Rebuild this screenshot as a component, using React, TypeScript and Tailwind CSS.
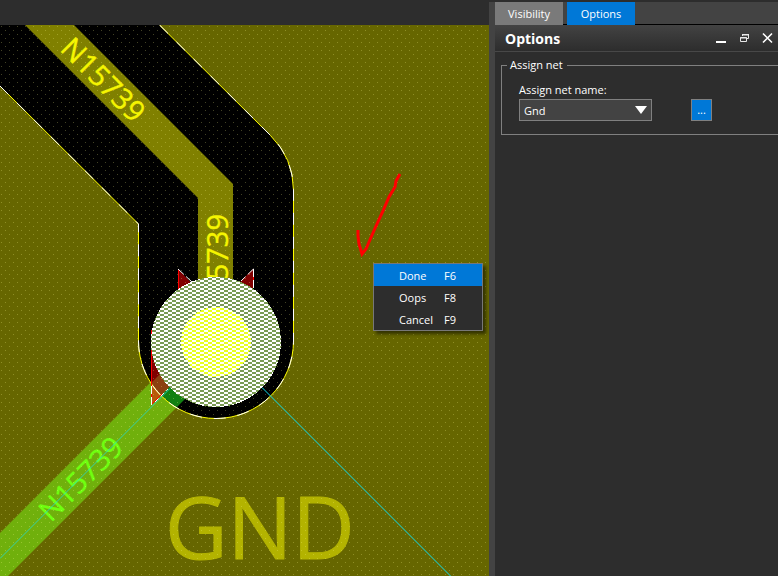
import { useState } from "react";

type TMenuItem = {
  label: string;
  shortcut: string;
};

const MENU_ITEMS: TMenuItem[] = [
  { label: "Done", shortcut: "F6" },
  { label: "Oops", shortcut: "F8" },
  { label: "Cancel", shortcut: "F9" },
];

const TABS = ["Visibility", "Options"];

const VOID_PATH =
  "M159.5 25 L270.5 135.5 A77.5 77.5 0 0 1 293.5 190 V341 A77.5 77.5 0 0 1 138.5 341 V224 L-0.5 85.5";

function BoardDrawing() {
  return (
    <svg
      className="block h-full w-full font-['Open_Sans','Noto_Sans',sans-serif]"
      role="img"
      aria-label="Board layout"
    >
      <defs>
        <pattern id="grid" width="8" height="8" patternUnits="userSpaceOnUse">
          <rect x="1" y="2" width="1" height="1" fill="#ffff90" />
          <rect x="5" y="6" width="1" height="1" fill="#ffff90" />
        </pattern>
        <pattern id="pad" width="8" height="4" patternUnits="userSpaceOnUse">
          <rect width="8" height="4" fill="#7b9b53" />
          <rect width="4" height="2" fill="#ffffff" />
          <rect x="4" y="2" width="4" height="2" fill="#ffffff" />
        </pattern>
        <pattern id="drill" width="8" height="4" patternUnits="userSpaceOnUse">
          <rect width="8" height="4" fill="#e8ff20" />
          <rect width="4" height="2" fill="#ffffff" />
          <rect x="4" y="2" width="4" height="2" fill="#ffffff" />
        </pattern>
        <clipPath id="clearance">
          <circle cx="216" cy="341" r="77" />
        </clipPath>
      </defs>

      <g transform="translate(0 -25)">
        {/* Copper plane */}
        <rect y="25" width="100%" height="100%" fill="#666600" />
        <text x="165" y="559" fontSize="86" fill="#b3b300" stroke="#b3b300" strokeLinejoin="round">
          GND
        </text>

        {/* Clearance around the trace */}
        <path d={`M0 25 ${VOID_PATH.replace("M", "L")} Z`} fill="#000000" />

        {/* Traces */}
        <path d="M25 25 H74 L233 184 V290 H198 V198 Z" fill="#808000" />
        <path d="M0 533 L156 377 L186 398 L8 576 H0 Z" fill="#70b00c" />
        <g clipPath="url(#clearance)">
          <path d="M150 320 V408 H240 V320 Z" fill="#000000" />
          <path d="M151 385 L165 371 L186 398 L176 408 L150 408 Z" fill="#128012" />
        </g>
        <path d="M151 405 V330 L190 366 Z" fill="#b85a08" />
        <g clipPath="url(#clearance)">
          <path d="M151 405 V330 L190 366 Z" fill="#8b4010" />
          <path d="M151 330 V383 L166 368 L190 366 Z" fill="#800000" />
        </g>
        <path d="M178 269 V292 H200 Z M253 269 V292 H230 Z" fill="#800000" />

        <g fill="#f5f500" stroke="#f5f500" strokeWidth="0.4" fontSize="29">
          <text transform="translate(59 50) rotate(45)">N15739</text>
          <text transform="translate(228 214) rotate(-90)" textAnchor="end">
            N15739
          </text>
        </g>
        <text
          transform="translate(51 523) rotate(-45)"
          fontSize="29"
          fill="#6fff10"
          stroke="#6fff10"
          strokeWidth="0.4"
        >
          N15739
        </text>
        <rect y="25" width="100%" height="100%" fill="url(#grid)" opacity="0.26" />

        {/* Outlines and rats */}
        <g fill="none">
          <path d={VOID_PATH} stroke="#ffff00" />
          <path d={VOID_PATH} stroke="#ffffff" strokeDasharray="12 12" />
          <path d="M151.500 405 V330 M178.500 269 V290 M253.500 269 V288" stroke="#ff0000" />
          <path
            d="M151.500 405 V383 M178 269 L192 282 M253.500 269 L241 281 M253.500 269 V288"
            stroke="#ffffff"
            strokeDasharray="8 3"
          />
          <path d="M262 387.500 L451 576.500" stroke="#10e0f0" />
          <path d="M0 558.500 L170 388.500" stroke="#20dce0" opacity="0.75" />
          <path d="M152 404 L162 394" stroke="#ff0000" />
          <path d="M155 402 L168 389" stroke="#ffffff" strokeDasharray="5 3" />
        </g>

        {/* Pad */}
        <g shapeRendering="crispEdges">
          <circle cx="216" cy="342" r="65" fill="url(#pad)" />
          <circle cx="216" cy="342" r="35" fill="url(#drill)" />
        </g>

        <path
          d="M400 174 L396 181 L395 187 L389 197 L383 211 L376 226 L369 242 L366 249 L362 254 L359 244 L358 236 V230"
          fill="none"
          stroke="#ff0000"
          strokeWidth="3"
        />
      </g>
    </svg>
  );
}

function ContextMenu() {
  const [active, setActive] = useState("Done");

  return (
    <div
      role="menu"
      className="absolute top-[238px] left-[373px] w-[110px] border border-[#777777] bg-[#2d2d2d] shadow-[3px_3px_3px_rgba(0,0,0,0.5)]"
    >
      {MENU_ITEMS.map((item) => (
        <button
          key={item.label}
          role="menuitem"
          onMouseEnter={() => setActive(item.label)}
          className={`flex h-[22px] w-full items-center pt-0.5 pl-[25px] text-left ${active === item.label ? "bg-[#0078d7]" : "bg-[#2d2d2d]"}`}
        >
          <span className="w-[45px]">{item.label}</span>
          <span>{item.shortcut}</span>
        </button>
      ))}
    </div>
  );
}

function OptionsPanel() {
  const [tab, setTab] = useState("Options");
  const [net, setNet] = useState("Gnd");

  return (
    <aside className="flex w-[289px] shrink-0 flex-col bg-[#2d2d2d] pt-[2px]">
      <div className="flex flex-1 flex-col bg-[#434343] pl-[6px]">
        {/* Tabs */}
        <div role="tablist" className="flex h-[23px] gap-1 shadow-[inset_0_-1px_0_#000000]">
          {TABS.map((name) => (
            <button
              key={name}
              role="tab"
              aria-selected={tab === name}
              onClick={() => setTab(name)}
              className={`h-full w-[68px] ${tab === name ? "bg-[#0078d7]" : "bg-[#7a7a7a]"}`}
            >
              {name}
            </button>
          ))}
        </div>

        {/* Title bar */}
        <header className="flex h-[27px] items-center justify-between border-b border-[#484848] bg-linear-to-b from-[#434343] to-[#2d2d2d] pr-[5px] pl-[10px]">
          <h2 className="pt-0.5 text-[14px] font-bold">Options</h2>
          <div className="flex gap-3">
            <button aria-label="Minimize">
              <svg width="11" height="12">
                <path d="M0 10h10" stroke="#ffffff" strokeWidth="2" />
              </svg>
            </button>
            <button aria-label="Restore">
              <svg width="11" height="12" fill="none" stroke="#e8e8e8">
                <path d="M3.500 4V2.500H9.500V6.500H7M3 2.500H10M1.500 5.500H7.500V9.500H1.500Z" />
                <path d="M3 3H10M1 6H8" />
              </svg>
            </button>
            <button aria-label="Close">
              <svg width="11" height="12">
                <path d="M1 1.500L10 10.500M10 1.500L1 10.500" stroke="#ffffff" strokeWidth="1.600" />
              </svg>
            </button>
          </div>
        </header>

        <div className="flex-1 bg-[#2d2d2d] pt-[5px] pl-[6px]">
          <fieldset className="border border-r-0 border-[#808080] pb-[13px] pl-[17px]">
            <legend className="-ml-3 pr-1 pl-[3px] leading-4">Assign net</legend>
            <label htmlFor="net-name" className="mt-2 block h-[18px] leading-[18px]">
              Assign net name:
            </label>
            <div className="flex">
              <div className="relative h-[22px] w-[133px]">
                <select
                  id="net-name"
                  value={net}
                  onChange={(e) => setNet(e.target.value)}
                  className="h-full w-full appearance-none border border-[#808080] bg-[#434343] pt-0.5 pl-1"
                >
                  <option>Gnd</option>
                  <option>N15739</option>
                </select>
                <svg
                  width="12"
                  height="8"
                  className="pointer-events-none absolute top-[7px] right-[5px]"
                >
                  <path d="M0 0H12L6 8Z" fill="#ffffff" />
                </svg>
              </div>
              <button
                aria-label="Browse nets"
                className="ml-[39px] h-[22px] w-[21px] border border-[#808080] bg-[#0078d7]"
              >
                ...
              </button>
            </div>
          </fieldset>
        </div>
      </div>
    </aside>
  );
}

export default function App() {
  return (
    <div className="flex h-screen overflow-hidden bg-[#2d2d2d] font-['Open_Sans','Noto_Sans',sans-serif] text-[11px] leading-4 text-white">
      <main className="flex min-w-0 flex-1 flex-col pt-[25px]">
        <div className="relative min-h-0 flex-1">
          <BoardDrawing />
          <ContextMenu />
        </div>
      </main>
      <OptionsPanel />
    </div>
  );
}
